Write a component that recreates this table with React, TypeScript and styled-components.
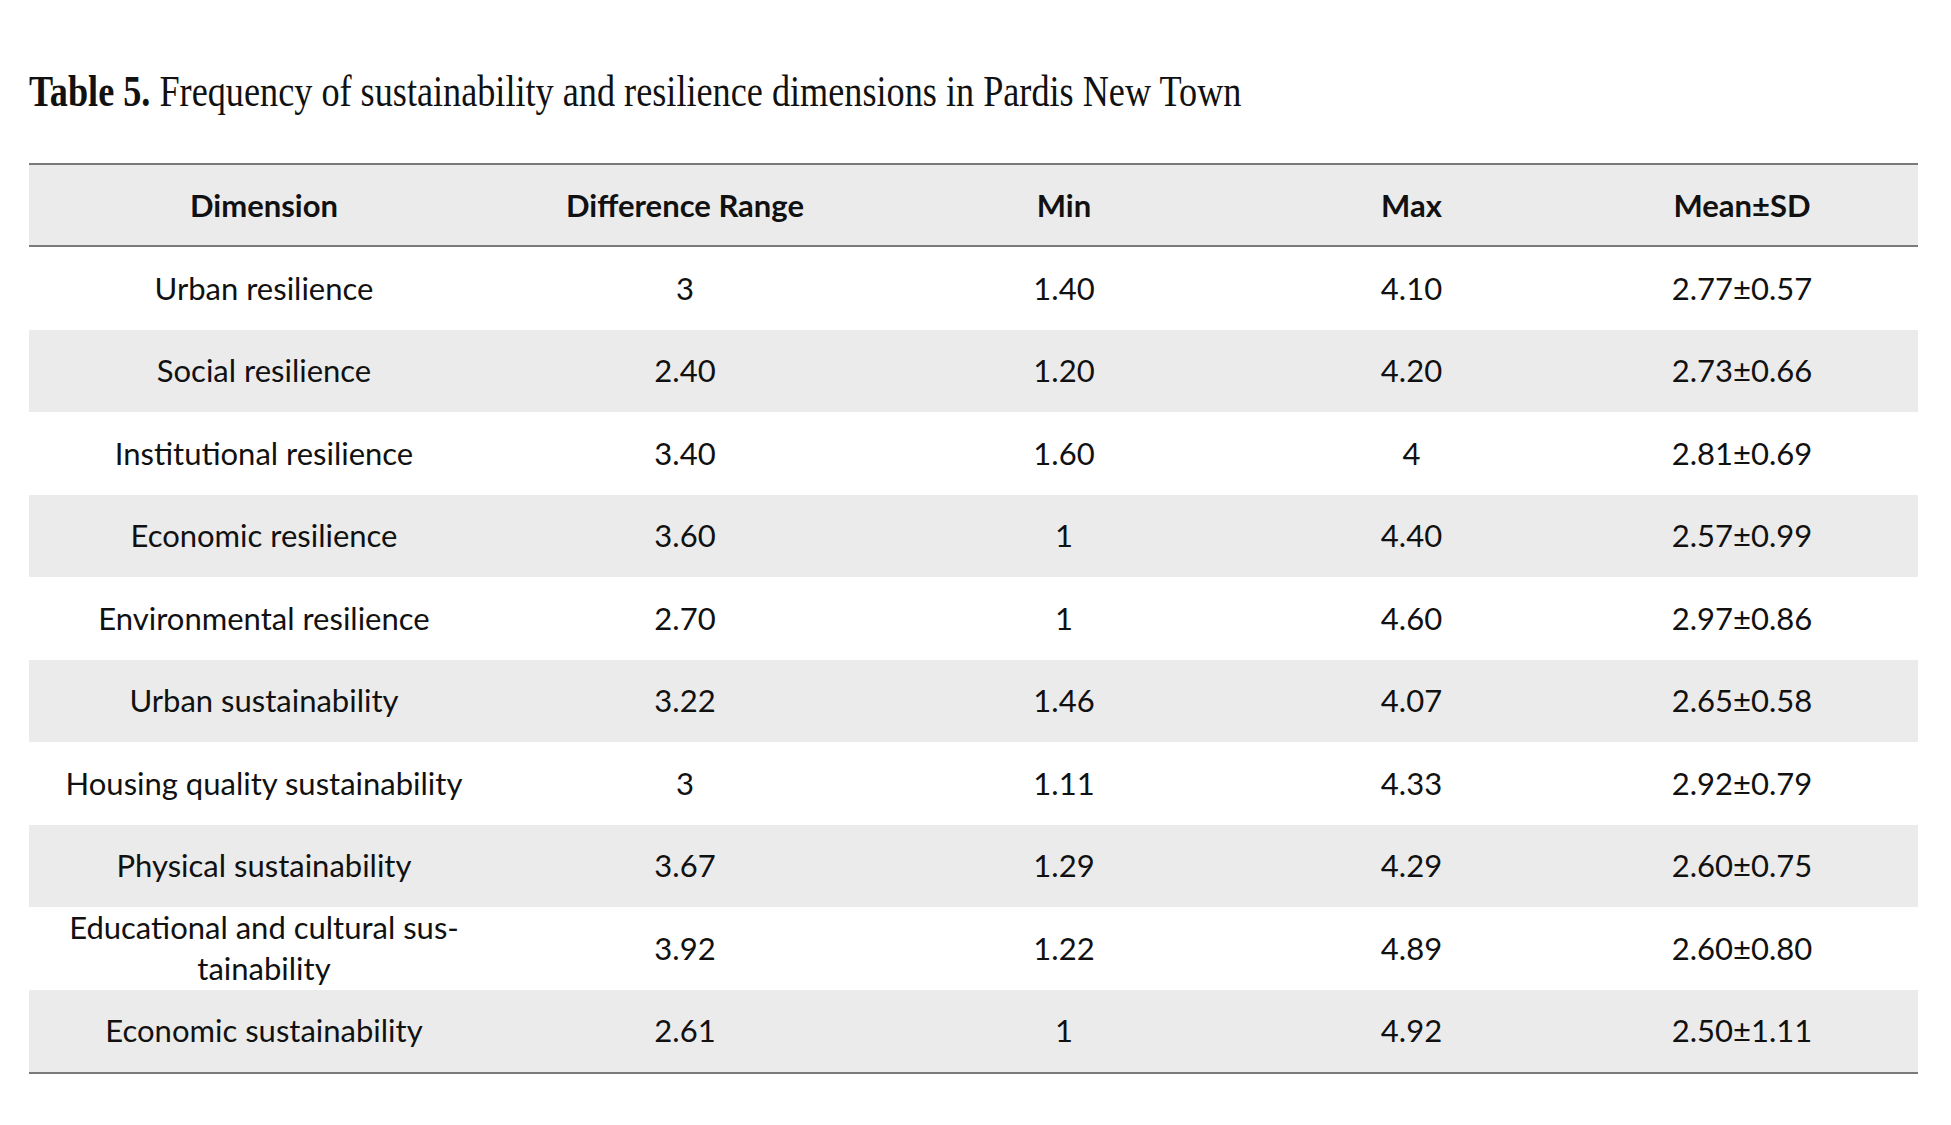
import React, { FC } from 'react';
import styled, { createGlobalStyle } from 'styled-components';

// Local Typings
interface RowData {
  dimension: React.ReactNode;
  range: string;
  min: string;
  max: string;
  mean: string;
}

// Local Variables
const GlobalStyle = createGlobalStyle`
  html, body {
    margin: 0;
    padding: 0;
    background: #ffffff;
  }
`;

const columns = ['Dimension', 'Difference Range', 'Min', 'Max', 'Mean±SD'];
const columnWidths = [470, 372, 386, 309, 352];

const rows: RowData[] = [
  { dimension: 'Urban resilience', range: '3', min: '1.40', max: '4.10', mean: '2.77±0.57' },
  { dimension: 'Social resilience', range: '2.40', min: '1.20', max: '4.20', mean: '2.73±0.66' },
  { dimension: 'Institutional resilience', range: '3.40', min: '1.60', max: '4', mean: '2.81±0.69' },
  { dimension: 'Economic resilience', range: '3.60', min: '1', max: '4.40', mean: '2.57±0.99' },
  { dimension: 'Environmental resilience', range: '2.70', min: '1', max: '4.60', mean: '2.97±0.86' },
  { dimension: 'Urban sustainability', range: '3.22', min: '1.46', max: '4.07', mean: '2.65±0.58' },
  { dimension: 'Housing quality sustainability', range: '3', min: '1.11', max: '4.33', mean: '2.92±0.79' },
  { dimension: 'Physical sustainability', range: '3.67', min: '1.29', max: '4.29', mean: '2.60±0.75' },
  {
    dimension: (
      <>
        Educational and cultural sus-
        <br />
        tainability
      </>
    ),
    range: '3.92',
    min: '1.22',
    max: '4.89',
    mean: '2.60±0.80',
  },
  { dimension: 'Economic sustainability', range: '2.61', min: '1', max: '4.92', mean: '2.50±1.11' },
];

const Page = styled.div`
  padding: 62px 25px 0 29px;
  width: 1889px;
`;

const Caption = styled.h1`
  margin: 0;
  font-family: "Liberation Serif", "Times New Roman", serif;
  font-size: 44px;
  font-weight: 400;
  line-height: 60px;
  color: #111111;
  white-space: nowrap;
  transform: scaleX(0.823);
  transform-origin: left center;

  b {
    font-weight: 700;
  }
`;

const Table = styled.table`
  margin-top: 41px;
  width: 1889px;
  border-collapse: collapse;
  table-layout: fixed;
  font-family: Lato, "Open Sans", sans-serif;
  color: #111111;
  border-top: 2px solid #7a7a7a;
  border-bottom: 2px solid #7a7a7a;
`;

const HeadRow = styled.tr`
  background: #ebebeb;
  border-bottom: 2px solid #7a7a7a;
`;

const HeadCell = styled.th`
  height: 80px;
  padding: 0;
  font-size: 31px;
  font-weight: 700;
  text-align: center;
  vertical-align: middle;
`;

const BodyRow = styled.tr<{ $shaded: boolean }>`
  background: ${({ $shaded }) => ($shaded ? '#ebebeb' : '#ffffff')};
`;

const Cell = styled.td`
  height: 82.5px;
  padding: 0;
  font-size: 31px;
  font-weight: 400;
  line-height: 41px;
  text-align: center;
  vertical-align: middle;
`;

// Component Definition
const App: FC = () => (
  <Page>
    <GlobalStyle />
    <Caption>
      <b>Table 5.</b> Frequency of sustainability and resilience dimensions in Pardis New Town
    </Caption>

    <Table>
      <colgroup>
        {columnWidths.map((width, i) => (
          <col key={i} style={{ width }} />
        ))}
      </colgroup>
      <thead>
        <HeadRow>
          {columns.map((label) => (
            <HeadCell key={label}>{label}</HeadCell>
          ))}
        </HeadRow>
      </thead>
      <tbody>
        {rows.map((row, i) => (
          <BodyRow $shaded={i % 2 === 1} key={i}>
            <Cell>{row.dimension}</Cell>
            <Cell>{row.range}</Cell>
            <Cell>{row.min}</Cell>
            <Cell>{row.max}</Cell>
            <Cell>{row.mean}</Cell>
          </BodyRow>
        ))}
      </tbody>
    </Table>
  </Page>
);

export default App;
